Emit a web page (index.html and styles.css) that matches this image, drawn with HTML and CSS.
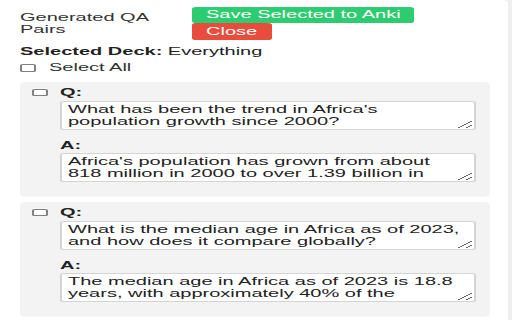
FILE: index.html
```html
<!DOCTYPE html>
<html lang="en">
<head>
<meta charset="utf-8">
<title>Generated QA Pairs</title>
<link rel="stylesheet" href="styles.css">
</head>
<body>
<div class="page">
  <header class="header">
    <h1 class="title">Generated QA Pairs</h1>
    <div class="actions">
      <button class="btn btn-save">Save Selected to Anki</button>
      <button class="btn btn-close">Close</button>
    </div>
  </header>
  <div class="deck"><strong>Selected Deck:</strong> Everything</div>
  <label class="select-all"><input type="checkbox" class="cb"><span>Select All</span></label>
  <div class="cards">
    <div class="card">
      <input type="checkbox" class="cb">
      <div class="qa">
        <div class="lbl">Q:</div>
        <textarea class="field">What has been the trend in Africa's population growth since 2000?</textarea>
        <div class="lbl">A:</div>
        <textarea class="field">Africa's population has grown from about 818 million in 2000 to over 1.39 billion in 2023, making it the fastest-growing continent.</textarea>
      </div>
    </div>
    <div class="card">
      <input type="checkbox" class="cb">
      <div class="qa">
        <div class="lbl">Q:</div>
        <textarea class="field">What is the median age in Africa as of 2023, and how does it compare globally?</textarea>
        <div class="lbl">A:</div>
        <textarea class="field">The median age in Africa as of 2023 is 18.8 years, with approximately 40% of the population being under 15.</textarea>
      </div>
    </div>
  </div>
</div>
</body>
</html>
```
FILE: styles.css
```css
html {
  background: #efefef;
}
body {
  margin: 0;
  overflow: hidden;
  font-family: "Liberation Sans", Arial, sans-serif;
  font-size: 10px;
  line-height: 11.5px;
  color: #333;
}
.page {
  width: 254px;
  min-height: 320px;
  box-sizing: border-box;
  padding: 0 9.5px 0 10px;
  background: #fff;
  border-top-right-radius: 3px;
  transform: scaleX(2);
  transform-origin: 0 0;
}
.header {
  display: flex;
  align-items: center;
  padding-top: 7px;
}
.title {
  width: 80px;
  margin: 0 6px 0 0;
  font-size: 10px;
  font-weight: normal;
  line-height: 11.5px;
}
.actions {
  display: flex;
  flex-direction: column;
  align-items: flex-start;
}
.btn {
  height: 16px;
  padding: 0 7px;
  border: none;
  border-radius: 2px;
  color: #fff;
  font-family: inherit;
  font-size: 10px;
  line-height: 16px;
}
.btn-save {
  background: #2ecc71;
}
.btn-close {
  background: #e74c3c;
  height: 17px;
}
.deck {
  margin-top: 6px;
  color: #222;
}
.deck strong {
  color: #222;
}
.select-all {
  display: flex;
  align-items: center;
  gap: 7px;
  margin-top: 4.5px;
  color: #333;
}
.cb {
  appearance: none;
  -webkit-appearance: none;
  flex: none;
  width: 7.5px;
  height: 7.5px;
  margin: 0;
  box-sizing: border-box;
  border: 0.6px solid #808080;
  border-radius: 1.5px;
  background: #fff;
}
.cards {
  display: flex;
  flex-direction: column;
  gap: 5px;
  margin-top: 8.5px;
}
.card {
  display: flex;
  align-items: flex-start;
  gap: 6.5px;
  padding: 5px 6.5px 5px 6px;
  background: #f3f3f3;
  border-radius: 3px;
}
.card .cb {
  margin-top: 1.5px;
}
.qa {
  flex: 1;
  display: flex;
  flex-direction: column;
}
.lbl {
  font-weight: bold;
  color: #222;
}
.field {
  display: block;
  height: 29px;
  margin: 2px 0 10px;
  padding: 2px 3px 0;
  box-sizing: border-box;
  border: 1px solid #d4d4d4;
  border-radius: 2px;
  background: #fff;
  color: #222;
  font-family: inherit;
  font-size: 10px;
  line-height: 12px;
  overflow: hidden;
  resize: vertical;
}
```
